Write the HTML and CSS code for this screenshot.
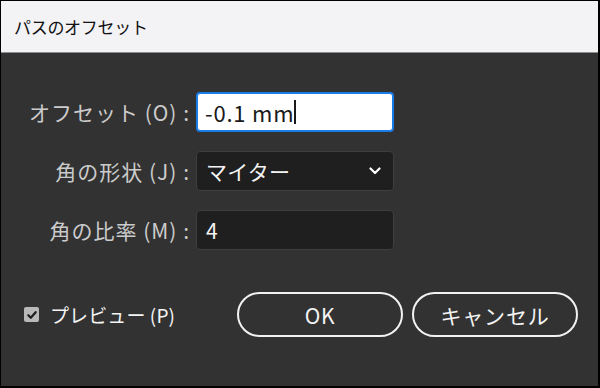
FILE: index.html
```html
<!DOCTYPE html>
<html lang="ja">
<head>
    <meta charset="UTF-8">
    <title>パスのオフセット</title>
    <link rel="stylesheet" href="styles.css">
</head>
<body>
    <div class="dialog">
        <div class="titlebar">パスのオフセット</div>
        <div class="content">
            <div class="form">
                <label class="label">オフセット (O) :</label>
                <div class="field focused">-0.1 mm<span class="caret"></span></div>

                <label class="label">角の形状 (J) :</label>
                <div class="field select">
                    <span>マイター</span>
                    <svg class="chevron" width="12" height="8" viewBox="0 0 12 8">
                        <path d="M1.5 1.5 L6 6 L10.5 1.5" fill="none" stroke="#ffffff" stroke-width="2.2" stroke-linecap="round" stroke-linejoin="round"/>
                    </svg>
                </div>

                <label class="label">角の比率 (M) :</label>
                <div class="field">4</div>
            </div>

            <div class="footer">
                <div class="preview">
                    <span class="checkbox">
                        <svg width="14" height="14" viewBox="0 0 14 14">
                            <path d="M3.3 7.2 L5.8 9.8 L10.7 4.2" fill="none" stroke="#1e1e1e" stroke-width="2.2" stroke-linecap="round" stroke-linejoin="round"/>
                        </svg>
                    </span>
                    プレビュー (P)
                </div>
                <div class="buttons">
                    <button class="btn">OK</button>
                    <button class="btn">キャンセル</button>
                </div>
            </div>
        </div>
    </div>
</body>
</html>
```

FILE: styles.css
```css
html, body {
    margin: 0;
    padding: 0;
    background: #000000;
}
body {
    font-family: "Noto Sans CJK JP", "Noto Sans", sans-serif;
}
.dialog {
    width: 597px;
    height: 385px;
    margin: 1px 0 0 1px;
    display: flex;
    flex-direction: column;
    background: #323232;
}
.titlebar {
    height: 52px;
    box-sizing: border-box;
    padding: 0 0 0 13px;
    display: flex;
    align-items: center;
    background: #f3f2f5;
    border-bottom: 1px solid #8e8e8e;
    color: #111111;
    font-size: 17px;
    letter-spacing: -0.3px;
}
.content {
    flex: 1;
    padding: 39px 20px 0 0;
}
.form {
    display: grid;
    grid-template-columns: 189px 198px;
    column-gap: 6px;
    row-gap: 19px;
    align-items: center;
}
.label {
    text-align: right;
    color: #cbcbcb;
    font-size: 21px;
    letter-spacing: 1px;
    white-space: nowrap;
}
.field {
    height: 40px;
    box-sizing: border-box;
    display: flex;
    align-items: center;
    padding: 0 9px;
    background: #1f1f1f;
    border: 1px solid #3e3e3e;
    border-radius: 4px;
    color: #f4f4f4;
    font-size: 21px;
    letter-spacing: 0.3px;
}
.field.focused {
    background: #ffffff;
    border: 2px solid #1a7ce8;
    color: #1a1a1a;
    padding-left: 7px;
    font-size: 22px;
    letter-spacing: 0.8px;
}
.caret {
    display: inline-block;
    width: 2px;
    height: 24px;
    background: #1a1a1a;
}
.select {
    justify-content: space-between;
    padding-right: 12px;
}
.footer {
    margin-top: 42px;
    display: flex;
    align-items: center;
    justify-content: space-between;
    padding-left: 23px;
}
.preview {
    display: flex;
    align-items: center;
    gap: 11px;
    color: #f4f4f4;
    font-size: 19px;
    letter-spacing: 0.1px;
}
.checkbox {
    width: 15px;
    height: 15px;
    display: flex;
    align-items: center;
    justify-content: center;
    background: #b9b9b9;
    border-radius: 2px;
}
.buttons {
    display: flex;
    gap: 9px;
}
.btn {
    width: 166px;
    height: 45px;
    background: transparent;
    border: 2px solid #f2f2f2;
    border-radius: 23px;
    color: #f4f4f4;
    font-family: "Noto Sans CJK JP", "Noto Sans", sans-serif;
    font-size: 21px;
    letter-spacing: 0.8px;
    cursor: pointer;
}
```
